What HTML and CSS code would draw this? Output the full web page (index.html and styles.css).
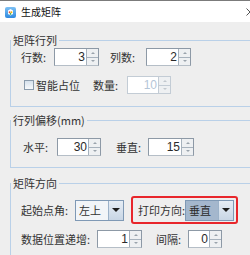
FILE: index.html
```html
<!DOCTYPE html>
<html lang="zh">
<head>
    <meta charset="utf-8">
    <title>生成矩阵</title>
    <link rel="stylesheet" href="styles.css">
</head>
<body>
    <div class="titlebar">
        <svg class="app-icon" width="11" height="11" viewBox="0 0 11 11">
            <defs>
                <linearGradient id="ig" x1="0" y1="0" x2="0" y2="1">
                    <stop offset="0" stop-color="#7cc0f4"/>
                    <stop offset="1" stop-color="#2f8ae0"/>
                </linearGradient>
            </defs>
            <rect x="0" y="0" width="11" height="11" rx="2" fill="url(#ig)"/>
            <path d="M3 3.5 L5.5 2 L8 3.5 L8 7 L5.5 8.6 L3 7 Z" fill="#fff"/>
            <circle cx="4.6" cy="5.2" r="0.9" fill="#e94b3c"/>
            <circle cx="6.5" cy="5.2" r="0.9" fill="#f4b400"/>
            <circle cx="5.5" cy="6.9" r="0.9" fill="#34a853"/>
        </svg>
        <span class="title">生成矩阵</span>
        <!-- close button, only its left half fits in the frame -->
        <svg class="close" width="4" height="8" viewBox="0 0 4 8">
            <path d="M0.5 0.5 L7.5 7.5 M0.5 7.5 L7.5 0.5" stroke="#555" stroke-width="1" fill="none"/>
        </svg>
    </div>

    <div class="content">
        <fieldset class="group group--rows">
            <legend>矩阵行列</legend>
            <div class="row row--first">
                <span class="label label--33">行数:</span>
                <span class="spinner w45"><span class="field">3</span><span class="arrows"><i></i><i></i></span></span>
                <span class="label label--36 gap-11">列数:</span>
                <span class="spinner w45"><span class="field">2</span><span class="arrows"><i></i><i></i></span></span>
            </div>
            <div class="row row--second">
                <span class="check"></span>
                <span class="label label--57">智能占位</span>
                <span class="label label--34">数量:</span>
                <span class="spinner w44 disabled"><span class="field">10</span><span class="arrows"><i></i><i></i></span></span>
            </div>
        </fieldset>

        <fieldset class="group group--offset">
            <legend>行列偏移(mm)</legend>
            <div class="row row--offset">
                <span class="label label--34">水平:</span>
                <span class="spinner w44"><span class="field">30</span><span class="arrows"><i></i><i></i></span></span>
                <span class="label label--32 gap-15">垂直:</span>
                <span class="spinner w46"><span class="field">15</span><span class="arrows"><i></i><i></i></span></span>
            </div>
        </fieldset>

        <fieldset class="group group--direction">
            <legend>矩阵方向</legend>
            <div class="row row--first">
                <span class="label label--54">起始点角:</span>
                <span class="combo"><span class="value">左上</span><span class="drop"></span></span>
                <div class="highlight">
                    <span class="label label--47">打印方向:</span>
                    <span class="combo combo--selected"><span class="value">垂直</span><span class="drop"></span></span>
                </div>
            </div>
            <div class="row row--step">
                <span class="label label--76">数据位置递增:</span>
                <span class="spinner w45"><span class="field">1</span><span class="arrows"><i></i><i></i></span></span>
                <span class="label label--32 gap-14">间隔:</span>
                <span class="spinner w34"><span class="field">0</span><span class="arrows"><i></i><i></i></span></span>
            </div>
        </fieldset>
    </div>
</body>
</html>
```

FILE: styles.css
```css
:root {
    --ff: "Noto Sans CJK SC", "Liberation Sans", sans-serif;
    --ff-num: "Liberation Sans", sans-serif;
    --group-line: #b9d0e8;
    --text: #333;
}

body {
    font-family: var(--ff);
    color: var(--text);
    background: #eeeeee;

    margin: 0;
    overflow: hidden;
}

/* title bar */
.titlebar {
    height: 21px;
    border-top: 1px solid #7b7b7b;
    background: #fff;

    display: flex;
    align-items: center;
}
.titlebar .app-icon {
    margin-left: 5px;
    margin-top: 1px;
}
.titlebar .title {
    font-size: 10px;
    color: #111;
    margin-left: 5px;
}
.titlebar .close {
    margin-left: auto;
}

/* groups */
.content {
    padding-top: 11px;
}

.group {
    border: 1px solid var(--group-line);
    border-right: 0;
    margin: 0 0 0 10px;
    padding: 0;
    min-width: 0;
}
.group legend {
    font-size: 11px;
    line-height: 15px;
    padding: 0 2px;
}
.group--rows {
    padding-bottom: 12px;
}
.group--offset {
    margin-top: 6px;
    padding-top: 10px;
    padding-bottom: 11px;
}
.group--direction {
    margin-top: 8px;
    padding-top: 5px;
    padding-bottom: 7px;
    border-bottom: 0;
}

.row {
    display: flex;
    align-items: center;
    padding-left: 10px;
}
.row--second {
    margin-top: 10px;
}
.row--offset {
    padding-left: 12px;
}
.row--step {
    margin-top: 6px;
}

.label {
    font-size: 11px;
    line-height: 15px;
    white-space: nowrap;
    flex: none;
}
.label--32 { width: 32px; }
.label--33 { width: 33px; }
.label--34 { width: 34px; }
.label--36 { width: 36px; }
.label--47 { width: 47px; }
.label--54 { width: 54px; }
.label--57 { width: 57px; }
.label--76 { width: 76px; }
.gap-11 { margin-left: 11px; }
.gap-14 { margin-left: 14px; }
.gap-15 { margin-left: 15px; }

/* checkbox */
.check {
    width: 10px;
    height: 10px;
    box-sizing: border-box;
    border: 1px solid #8a9bac;
    background: linear-gradient(#d6e1ec, #f7f9fb);
    margin-left: 3px;
    margin-right: 2px;
}

/* spinner */
.spinner {
    height: 18px;
    box-sizing: border-box;
    border: 1px solid #8d99a6;
    border-bottom-color: #b5bec7;
    background: #fff;

    display: flex;
    flex: none;
}
.w34 { width: 34px; }
.w44 { width: 44px; }
.w45 { width: 45px; }
.w46 { width: 46px; }
.spinner .field {
    flex: 1;
    font-family: var(--ff-num);
    font-size: 12px;
    line-height: 16px;
    text-align: right;
    padding-right: 1px;
    color: #2a2a2a;
}
.spinner .arrows {
    width: 11px;
    border-left: 1px solid #a7b2bd;

    display: flex;
    flex-direction: column;
}
.spinner .arrows i {
    flex: 1;
    background: #eef0f2;

    display: flex;
    justify-content: center;
    align-items: center;
}
.spinner .arrows i + i {
    border-top: 1px solid #a7b2bd;
}
.spinner .arrows i::after {
    content: "";
    border-left: 2px solid transparent;
    border-right: 2px solid transparent;
    border-bottom: 2px solid #9aa3ac;
}
.spinner .arrows i + i::after {
    border-bottom: 0;
    border-top: 2px solid #9aa3ac;
}
.spinner.disabled {
    border-color: #c3ccd5;
}
.spinner.disabled .field {
    color: #b4c6d8;
}
.spinner.disabled .arrows,
.spinner.disabled .arrows i + i {
    border-color: #c3ccd5;
}
.spinner.disabled .arrows i::after {
    border-bottom-color: #c2c8ce;
}
.spinner.disabled .arrows i + i::after {
    border-top-color: #c2c8ce;
}

/* combo box */
.combo {
    width: 49px;
    height: 21px;
    box-sizing: border-box;
    border: 1px solid #7f99b5;

    display: flex;
    flex: none;
}
.combo .value {
    flex: 1;
    font-size: 11px;
    line-height: 19px;
    padding-left: 3px;
    background: #f2f5f8;
    color: #333;
}
.combo .drop {
    width: 14px;
    border-left: 1px solid #9cb2c9;
    background: linear-gradient(#e6edf5, #c8d6e5);

    display: flex;
    justify-content: center;
    align-items: center;
}
.combo .drop::after {
    content: "";
    border-left: 4px solid transparent;
    border-right: 4px solid transparent;
    border-top: 4px solid #1e1e1e;
}
.combo--selected .value {
    background: #a4b7cd;
    color: #2b2b2b;
}

/* red highlight round the print direction */
.highlight {
    width: 107px;
    height: 28px;
    box-sizing: border-box;
    border: 2px solid #e8262b;
    border-radius: 3px;
    margin-left: 7px;
    padding-left: 5px;

    display: flex;
    align-items: center;
}
```
